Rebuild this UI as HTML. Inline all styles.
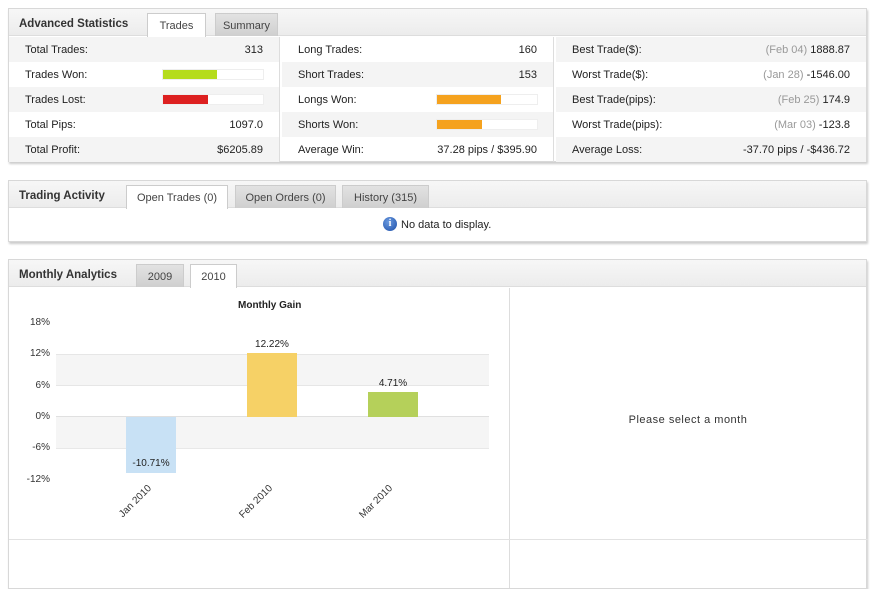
<!DOCTYPE html>
<html><head><meta charset="utf-8"><style>
*{margin:0;padding:0;box-sizing:border-box}
body{width:879px;height:578px;background:#fff;font-family:"Liberation Sans",Arial,sans-serif;font-size:11px;color:#222;position:relative;overflow:hidden}
.panel{position:absolute;left:8px;width:859px;border:1px solid #d8d8d8;box-shadow:1px 2px 2px #ccc;background:#fff}
.hdr{height:27px;background:linear-gradient(#f7f7f7,#ececec);border-bottom:1px solid #ddd;position:relative}
.ttl{position:absolute;left:10px;top:9px;font-weight:bold;font-size:11.5px;color:#333}
.tab{position:absolute;top:4px;height:23px;line-height:24px;text-align:center;color:#444;background:linear-gradient(#e2e2e2,#cfcfcf);border:1px solid #ccc;border-bottom:none}
.tab.on{background:#fff;height:24px}
.col{position:absolute;top:28px}
.row{height:25px;line-height:26px;padding:0 16px;position:relative}
.g{background:#f4f4f4}
.r{position:absolute;right:16px;top:0}
.d{color:#999}
.bar{position:absolute;top:7px;height:11px;border:1px solid #eee;background:#fff;width:102px}
.bar i{display:block;height:9px}
.yl{position:absolute;left:0;width:49px;text-align:right;font-size:10px;color:#333}
.xl{position:absolute;font-size:10px;transform:rotate(-45deg);transform-origin:right top;white-space:nowrap;color:#333}
</style></head><body>

<div class="panel" style="top:8px;height:154px">
 <div class="hdr"><span class="ttl">Advanced Statistics</span>
  <div class="tab on" style="left:138px;width:59px">Trades</div>
  <div class="tab" style="left:206px;width:63px">Summary</div></div>
 <div class="col" style="left:0;width:271px;border-right:1px solid #ddd">
  <div class="row g">Total Trades:<span class="r">313</span></div>
  <div class="row">Trades Won:<div class="bar" style="left:153px"><i style="width:54px;background:#b5dc1c"></i></div></div>
  <div class="row g">Trades Lost:<div class="bar" style="left:153px"><i style="width:45px;background:#dd2020"></i></div></div>
  <div class="row">Total Pips:<span class="r">1097.0</span></div>
  <div class="row g">Total Profit:<span class="r">$6205.89</span></div>
 </div>
 <div class="col" style="left:273px;width:272px;border-right:1px solid #ddd">
  <div class="row">Long Trades:<span class="r">160</span></div>
  <div class="row g">Short Trades:<span class="r">153</span></div>
  <div class="row">Longs Won:<div class="bar" style="left:154px"><i style="width:64px;background:#f5a21e"></i></div></div>
  <div class="row g">Shorts Won:<div class="bar" style="left:154px"><i style="width:45px;background:#f5a21e"></i></div></div>
  <div class="row">Average Win:<span class="r">37.28 pips / $395.90</span></div>
 </div>
 <div class="col" style="left:547px;width:310px">
  <div class="row g">Best Trade($):<span class="r"><span class="d">(Feb 04)</span> 1888.87</span></div>
  <div class="row">Worst Trade($):<span class="r"><span class="d">(Jan 28)</span> -1546.00</span></div>
  <div class="row g">Best Trade(pips):<span class="r"><span class="d">(Feb 25)</span> 174.9</span></div>
  <div class="row">Worst Trade(pips):<span class="r"><span class="d">(Mar 03)</span> -123.8</span></div>
  <div class="row g">Average Loss:<span class="r">-37.70 pips / -$436.72</span></div>
 </div>
</div>

<div class="panel" style="top:180px;height:62px">
 <div class="hdr"><span class="ttl">Trading Activity</span>
  <div class="tab on" style="left:117px;width:102px">Open Trades (0)</div>
  <div class="tab" style="left:226px;width:101px">Open Orders (0)</div>
  <div class="tab" style="left:333px;width:87px">History (315)</div></div>
 <div style="position:absolute;left:374px;top:36px;width:14px;height:14px;border-radius:50%;background:radial-gradient(circle at 40% 35%,#6a9ae0,#1d4fa8);color:#fff;font:bold 10px/14px serif;text-align:center">i</div>
 <div style="position:absolute;left:392px;top:38px">No data to display.</div>
</div>

<div class="panel" style="top:259px;height:330px">
 <div class="hdr"><span class="ttl">Monthly Analytics</span>
  <div class="tab" style="left:127px;width:48px">2009</div>
  <div class="tab on" style="left:181px;width:47px">2010</div></div>
 <div style="position:absolute;left:500px;top:28px;width:1px;height:300px;background:#ddd"></div>
 <div style="position:absolute;left:0;top:279px;width:859px;height:1px;background:#e2e2e2"></div>
 <div style="position:absolute;left:500px;top:154px;width:358px;text-align:center;letter-spacing:0.5px;color:#333">Please select a month</div>
 <div style="position:absolute;left:-8px;top:-259px;width:510px;height:540px">
  <div style="position:absolute;left:237px;top:299px;font-weight:bold;font-size:10px">Monthly Gain</div>
  <div style="position:absolute;left:55px;top:353px;width:433px;height:32px;background:#f5f5f5;border-top:1px solid #e6e6e6;border-bottom:1px solid #e6e6e6"></div>
  <div style="position:absolute;left:55px;top:415px;width:433px;height:33px;background:#f5f5f5;border-top:1px solid #e0e0e0;border-bottom:1px solid #e8e8e8"></div>
  <div class="yl" style="top:316px">18%</div>
  <div class="yl" style="top:347px">12%</div>
  <div class="yl" style="top:379px">6%</div>
  <div class="yl" style="top:410px">0%</div>
  <div class="yl" style="top:441px">-6%</div>
  <div class="yl" style="top:473px">-12%</div>
  <div style="position:absolute;left:125px;top:416px;width:50px;height:56px;background:#c8e1f5"></div>
  <div style="position:absolute;left:246px;top:352px;width:50px;height:64px;background:#f6d166"></div>
  <div style="position:absolute;left:367px;top:391px;width:50px;height:25px;background:#b5d05a"></div>
  <div style="position:absolute;left:125px;top:457px;width:50px;text-align:center;font-size:10px">-10.71%</div>
  <div style="position:absolute;left:246px;top:338px;width:50px;text-align:center;font-size:10px">12.22%</div>
  <div style="position:absolute;left:367px;top:377px;width:50px;text-align:center;font-size:10px">4.71%</div>
  <div class="xl" style="left:104px;top:482px">Jan 2010</div>
  <div class="xl" style="left:224px;top:482px">Feb 2010</div>
  <div class="xl" style="left:344px;top:482px">Mar 2010</div>
 </div>
</div>
</body></html>
